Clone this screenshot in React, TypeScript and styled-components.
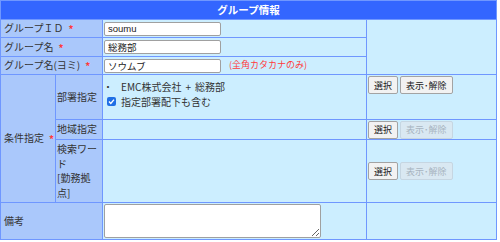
import styled, { createGlobalStyle } from 'styled-components'

const GlobalStyle = createGlobalStyle`
	body {
		margin: 0;
		background: #ffffff;
		font-family: 'Noto Sans CJK JP', 'Liberation Sans', sans-serif;
		color: #333333;
	}
`

export default function App() {
	return (
		<>
			<GlobalStyle />
			<FormGrid>
				<Header>グループ情報</Header>

				{/* basic fields */}
				<Label $span={2}>
					グループＩＤ<Required>*</Required>
				</Label>
				<Value>
					<TextInput defaultValue="soumu" />
				</Value>
				<SideCell $rowSpan={3} />

				<Label $span={2}>
					グループ名<Required>*</Required>
				</Label>
				<Value>
					<TextInput defaultValue="総務部" />
				</Value>

				<Label $span={2}>
					グループ名(ヨミ)<Required>*</Required>
				</Label>
				<Value>
					<TextInput defaultValue="ソウムブ" />
					<Note>(全角カタカナのみ)</Note>
				</Value>

				{/* conditions */}
				<Label $rowSpan={3}>
					条件指定<Required>*</Required>
				</Label>
				<SubLabel>部署指定</SubLabel>
				<Value $top>
					<Selection>
						<Line>
							<Bullet>・</Bullet>EMC株式会社<Joiner>+</Joiner>総務部
						</Line>
						<Line>
							<CheckMark>
								<svg width="9" height="9" viewBox="0 0 9 9">
									<path
										d="M2 4.6 L3.8 6.4 L7 2.6"
										fill="none"
										stroke="#fff"
										strokeWidth="1.4"
									/>
								</svg>
							</CheckMark>
							指定部署配下も含む
						</Line>
					</Selection>
				</Value>
				<ButtonCell $top>
					<SmallButton>選択</SmallButton>
					<SmallButton>表示･解除</SmallButton>
				</ButtonCell>

				<SubLabel>地域指定</SubLabel>
				<Value />
				<ButtonCell>
					<SmallButton>選択</SmallButton>
					<SmallButton disabled>表示･解除</SmallButton>
				</ButtonCell>

				<SubLabel>
					検索ワード
					<br />
					[勤務拠点]
				</SubLabel>
				<Value />
				<ButtonCell>
					<SmallButton>選択</SmallButton>
					<SmallButton disabled>表示･解除</SmallButton>
				</ButtonCell>

				{/* remarks */}
				<Label $span={2}>備考</Label>
				<Value>
					<Remarks />
				</Value>
				<SideCell />
			</FormGrid>
		</>
	)
}

const FormGrid = styled.div`
	display: grid;
	width: 497px;
	box-sizing: border-box;
	grid-template-columns: 54px 46px 263px 129px;
	grid-template-rows: 18px 17px 18px 17px 44px 19px 62px 36px;
	gap: 1px;
	padding: 1px;
	background: #6f97ff;
	font-size: 10px;
	line-height: 14.5px;
`

const Header = styled.div`
	grid-column: 1 / -1;
	background: #3366ff;
	color: #ffffff;
	font-weight: bold;
	font-size: 10.5px;
	display: flex;
	align-items: center;
	justify-content: center;
`

const Label = styled.div<{ $span?: number; $rowSpan?: number }>`
	grid-column: span ${(p) => p.$span || 1};
	grid-row: span ${(p) => p.$rowSpan || 1};
	background: #aac8fb;
	display: flex;
	align-items: center;
	padding-left: 3px;
	white-space: nowrap;
`

const SubLabel = styled.div`
	background: #aac8fb;
	display: flex;
	align-items: center;
	padding-left: 1px;
`

const Required = styled.span`
	color: #ff3b3b;
	margin-left: 5px;
	font-size: 10px;
	font-weight: bold;
	position: relative;
	top: 1px;
`

const Value = styled.div<{ $top?: boolean }>`
	background: #cceeff;
	display: flex;
	align-items: ${(p) => (p.$top ? 'flex-start' : 'center')};
	padding-left: 1px;
`

const SideCell = styled.div<{ $rowSpan?: number }>`
	grid-row: span ${(p) => p.$rowSpan || 1};
	background: #cceeff;
`

const ButtonCell = styled.div<{ $top?: boolean }>`
	background: #cceeff;
	display: flex;
	align-items: ${(p) => (p.$top ? 'flex-start' : 'center')};
	gap: 2px;
	padding: ${(p) => (p.$top ? '1px' : '0')} 0 0 1px;
`

const TextInput = styled.input`
	width: 117px;
	height: 14px;
	box-sizing: border-box;
	border: 1px solid #a0a0a0;
	border-radius: 2px;
	padding: 0 3px;
	font-family: 'Liberation Sans', 'Noto Sans CJK JP', sans-serif;
	font-size: 9.5px;
	color: #222;
	background: #ffffff;
	outline: none;
`

const Note = styled.span`
	color: #ff3b3b;
	font-size: 9px;
	margin-left: 8px;
`

const Selection = styled.div`
	padding-top: 5px;
	display: flex;
	flex-direction: column;
`

const Line = styled.div`
	display: flex;
	align-items: center;
	height: 14.5px;
`

const Bullet = styled.span`
	margin-left: -1px;
	margin-right: 8px;
`

const Joiner = styled.span`
	margin: 0 4px;
`

const CheckMark = styled.span`
	width: 9px;
	height: 9px;
	margin-left: 3px;
	margin-right: 5px;
	border-radius: 2px;
	background: #1f6fe5;
	display: flex;
`

const SmallButton = styled.button`
	height: 18px;
	padding: 0 5px;
	font-family: 'Noto Sans CJK JP', sans-serif;
	font-size: 9px;
	color: #222;
	background: #f2f2f2;
	border: 1px solid #a3a3a3;
	border-radius: 2px;

	&:disabled {
		color: #a8b4c0;
		background: #d9e8f2;
		border-color: #c6d6e2;
	}
`

const Remarks = styled.textarea`
	width: 217px;
	height: 34px;
	box-sizing: border-box;
	margin: 0;
	border: 1px solid #a0a0a0;
	border-radius: 2px;
	background: #ffffff;
	resize: both;
`
